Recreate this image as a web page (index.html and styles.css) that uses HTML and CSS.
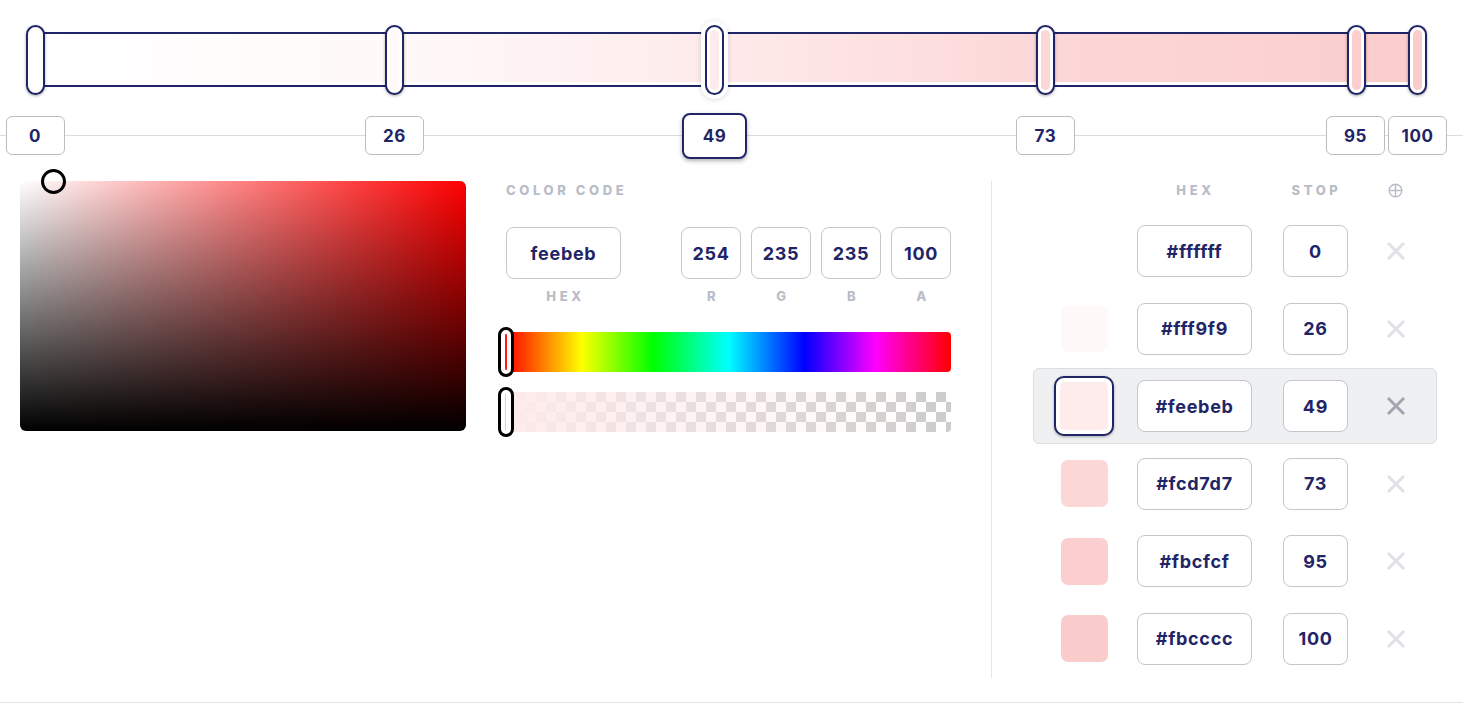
FILE: index.html
```html
<!DOCTYPE html>
<html>
<head>
<meta charset="utf-8">
<link rel="stylesheet" href="styles.css">
</head>
<body>
<div class="editor">
  <div class="gradient-area">
    <div class="bar"></div>
    <div class="handle" style="left:26px"><span style="background:#ffffff"></span></div>
    <div class="handle" style="left:385px"><span style="background:#fff9f9"></span></div>
    <div class="handle active" style="left:705px"><span style="background:#feebeb"></span></div>
    <div class="handle" style="left:1036px"><span style="background:#fcd7d7"></span></div>
    <div class="handle" style="left:1347px"><span style="background:#fbcfcf"></span></div>
    <div class="handle" style="left:1408px"><span style="background:#fbcccc"></span></div>
  </div>
  <div class="scale">
    <div class="tick" style="left:35px">0</div>
    <div class="tick" style="left:394.5px">26</div>
    <div class="tick active" style="left:714.5px">49</div>
    <div class="tick" style="left:1045.5px">73</div>
    <div class="tick" style="left:1355.5px">95</div>
    <div class="tick" style="left:1417.5px">100</div>
  </div>

  <div class="main">
    <div class="sv">
      <div class="sv-cursor"></div>
    </div>

    <div class="mid">
      <div class="caps section-label">COLOR CODE</div>
      <div class="code-row">
        <div class="field hex-field">
          <div class="input">feebeb</div>
          <div class="caps field-label">HEX</div>
        </div>
        <div class="rgba">
          <div class="field small">
            <div class="input">254</div>
            <div class="caps field-label">R</div>
          </div>
          <div class="field small">
            <div class="input">235</div>
            <div class="caps field-label">G</div>
          </div>
          <div class="field small">
            <div class="input">235</div>
            <div class="caps field-label">B</div>
          </div>
          <div class="field small">
            <div class="input">100</div>
            <div class="caps field-label">A</div>
          </div>
        </div>
      </div>
      <div class="slider hue"><div class="slider-handle"></div></div>
      <div class="slider alpha"><div class="alpha-fill"></div><div class="slider-handle faint"></div></div>
    </div>

    <div class="divider"></div>

    <div class="right">
      <div class="list-head">
        <div class="c-swatch"></div>
        <div class="c-hex caps">HEX</div>
        <div class="c-stop caps">STOP</div>
        <div class="c-del">
          <svg class="add-icon" width="15" height="15" viewBox="0 0 15 15"><circle cx="7.5" cy="7.5" r="6.3" fill="none" stroke="currentColor" stroke-width="1.4"/><path d="M7.5 1.2V13.8M1.2 7.5H13.8" stroke="currentColor" stroke-width="1.4"/></svg>
        </div>
      </div>
      <div class="rows">
        <div class="row">
          <div class="c-swatch"><div class="swatch" style="background:#ffffff"></div></div>
          <div class="c-hex"><div class="input">#ffffff</div></div>
          <div class="c-stop"><div class="input">0</div></div>
          <div class="c-del"><svg width="20" height="20" viewBox="0 0 20 20"><path d="M2 2L18 18M18 2L2 18" stroke="currentColor" stroke-width="3"/></svg></div>
        </div>
        <div class="row">
          <div class="c-swatch"><div class="swatch" style="background:#fff9f9"></div></div>
          <div class="c-hex"><div class="input">#fff9f9</div></div>
          <div class="c-stop"><div class="input">26</div></div>
          <div class="c-del"><svg width="20" height="20" viewBox="0 0 20 20"><path d="M2 2L18 18M18 2L2 18" stroke="currentColor" stroke-width="3"/></svg></div>
        </div>
        <div class="row selected">
          <div class="c-swatch"><div class="swatch-frame"><div class="swatch-inner" style="background:#feebeb"></div></div></div>
          <div class="c-hex"><div class="input">#feebeb</div></div>
          <div class="c-stop"><div class="input">49</div></div>
          <div class="c-del"><svg width="20" height="20" viewBox="0 0 20 20"><path d="M2 2L18 18M18 2L2 18" stroke="currentColor" stroke-width="3"/></svg></div>
        </div>
        <div class="row">
          <div class="c-swatch"><div class="swatch" style="background:#fcd7d7"></div></div>
          <div class="c-hex"><div class="input">#fcd7d7</div></div>
          <div class="c-stop"><div class="input">73</div></div>
          <div class="c-del"><svg width="20" height="20" viewBox="0 0 20 20"><path d="M2 2L18 18M18 2L2 18" stroke="currentColor" stroke-width="3"/></svg></div>
        </div>
        <div class="row">
          <div class="c-swatch"><div class="swatch" style="background:#fbcfcf"></div></div>
          <div class="c-hex"><div class="input">#fbcfcf</div></div>
          <div class="c-stop"><div class="input">95</div></div>
          <div class="c-del"><svg width="20" height="20" viewBox="0 0 20 20"><path d="M2 2L18 18M18 2L2 18" stroke="currentColor" stroke-width="3"/></svg></div>
        </div>
        <div class="row">
          <div class="c-swatch"><div class="swatch" style="background:#fbcccc"></div></div>
          <div class="c-hex"><div class="input">#fbcccc</div></div>
          <div class="c-stop"><div class="input">100</div></div>
          <div class="c-del"><svg width="20" height="20" viewBox="0 0 20 20"><path d="M2 2L18 18M18 2L2 18" stroke="currentColor" stroke-width="3"/></svg></div>
        </div>
      </div>
    </div>
  </div>
</div>
</body>
</html>
```

FILE: styles.css
```css
* { box-sizing: border-box; }

html, body {
  margin: 0;
  padding: 0;
  background: #ffffff;
  font-family: Inter, "Open Sans", "Liberation Sans", sans-serif;
  color: #1f2566;
}

.editor {
  width: 1463px;
  height: 706px;
  overflow: hidden;
}

/* ---------- gradient bar ---------- */
.gradient-area {
  position: relative;
  height: 87px;
  padding-top: 32px;
}

.bar {
  margin: 0 41px 0 27px;
  height: 55px;
  border: 2px solid #1f2566;
  padding-bottom: 3px;
  background-color: #ffffff;
  background-image: linear-gradient(to right, #ffffff 0%, #fff9f9 26%, #feebeb 49%, #fcd7d7 73%, #fbcfcf 95%, #fbcccc 100%);
  background-clip: content-box;
}

.handle {
  position: absolute;
  top: 25px;
  width: 19px;
  height: 70px;
  border: 2px solid #1f2566;
  border-radius: 10px;
  background: #ffffff;
  padding: 3px;
  box-shadow: 0 1px 3px rgba(0, 0, 0, 0.35);
}

.handle span {
  display: block;
  width: 100%;
  height: 100%;
  border-radius: 5px;
}

.handle.active {
  box-shadow: 0 0 0 4px #ffffff, 0 1px 6px 3px rgba(0, 0, 0, 0.2);
}

/* ---------- scale ---------- */
.scale {
  position: relative;
  height: 40px;
  margin-top: 29px;
}

.scale::before {
  content: "";
  position: absolute;
  left: 0;
  right: 0;
  top: 19px;
  height: 1px;
  background: #dcdcdc;
}

.tick {
  position: absolute;
  top: 0;
  width: 59px;
  height: 39px;
  margin-left: -29.5px;
  border: 1px solid #bdbdbd;
  border-radius: 6px;
  background: #ffffff;
  display: flex;
  align-items: center;
  justify-content: center;
  font-size: 17px;
  font-weight: 700;
  letter-spacing: 0.6px;
}

.tick.active {
  top: -3px;
  width: 65px;
  height: 46px;
  margin-left: -32.5px;
  border: 2px solid #1f2566;
  border-radius: 8px;
  box-shadow: 0 2px 4px rgba(0, 0, 0, 0.3);
}

/* ---------- main ---------- */
.main {
  display: flex;
  margin-top: 25px;
  height: 522px;
  border-bottom: 1px solid #e3e3e3;
}

.sv {
  position: relative;
  margin-left: 20px;
  width: 446px;
  height: 250px;
  border-radius: 6px;
  background-image: linear-gradient(to top, #000000, rgba(0, 0, 0, 0)), linear-gradient(to right, #ffffff, #ff0000);
}

.sv-cursor {
  position: absolute;
  left: 21px;
  top: -12px;
  width: 25px;
  height: 25px;
  border: 3px solid #000000;
  border-radius: 50%;
}

.caps {
  font-size: 13px;
  font-weight: 800;
  letter-spacing: 3.6px;
  color: #b9bdc7;
  line-height: 18px;
}

.mid {
  width: 453px;
  margin-left: 32px;
}

.section-label {
  padding-left: 8px;
}

.code-row {
  display: flex;
  margin-top: 28px;
  padding-left: 8px;
}

.field {
  display: flex;
  flex-direction: column;
  align-items: center;
}

.input {
  height: 52px;
  border: 1px solid #c5c6ce;
  border-radius: 8px;
  background: #ffffff;
  display: flex;
  align-items: center;
  justify-content: center;
  font-size: 18px;
  font-weight: 700;
  letter-spacing: 0.7px;
  color: #1f2566;
}

.hex-field .input { width: 115px; }
.field.small .input { width: 60px; }

.field-label {
  margin-top: 8px;
  padding-left: 4px;
}

.rgba {
  display: flex;
  gap: 10px;
  margin-left: 60px;
}

.slider {
  position: relative;
  height: 40px;
  margin-left: 8px;
  border-radius: 4px;
}

.hue {
  margin-top: 27px;
  background: linear-gradient(to right, #ff0000 0%, #ffff00 17%, #00ff00 33%, #00ffff 50%, #0000ff 67%, #ff00ff 83%, #ff0000 100%);
}

.alpha {
  margin-top: 20px;
  background-color: #ffffff;
  background-image:
    linear-gradient(45deg, #cccccc 25%, transparent 25%, transparent 75%, #cccccc 75%),
    linear-gradient(45deg, #cccccc 25%, transparent 25%, transparent 75%, #cccccc 75%);
  background-size: 20px 20px;
  background-position: 0 0, 10px 10px;
}

.alpha-fill {
  position: absolute;
  inset: 0;
  border-radius: 4px;
  background: linear-gradient(to right, rgba(254, 235, 235, 1), rgba(254, 235, 235, 0));
}

.slider-handle {
  position: absolute;
  left: -8px;
  top: -5px;
  width: 16px;
  height: 50px;
  border: 3px solid #000000;
  border-radius: 8px;
  background: #ffffff;
}

.slider-handle::after {
  content: "";
  position: absolute;
  left: 4px;
  top: 4px;
  bottom: 4px;
  width: 2px;
  border-radius: 1px;
  background: #ff1a1a;
}

.slider-handle.faint::after {
  background: #f6c9c9;
  width: 1px;
}

.divider {
  width: 1px;
  height: 497px;
  margin-left: 40px;
  background: #e6e6e6;
}

/* ---------- right list ---------- */
.right {
  width: 404px;
  margin-left: 41px;
}

.list-head,
.row {
  display: flex;
  align-items: center;
  padding-left: 20px;
}

.list-head {
  height: 18px;
}

.c-swatch {
  width: 60px;
  display: flex;
  justify-content: center;
}

.c-hex {
  width: 115px;
  margin-left: 23px;
  text-align: center;
}

.c-hex.caps,
.c-stop.caps { padding-left: 4px; }

.c-stop {
  width: 65px;
  margin-left: 31px;
  text-align: center;
}

.c-del {
  width: 20px;
  margin-left: 38px;
  display: flex;
  justify-content: center;
  color: #dfe1e6;
}

.add-icon { color: #b8bcc8; }

.rows {
  display: flex;
  flex-direction: column;
  gap: 1.5px;
  margin-top: 14px;
}

.row {
  height: 76px;
  border: 1px solid transparent;
  border-radius: 6px;
}

.row.selected {
  background: #eff0f2;
  border-color: #dcdde1;
}

.row.selected .c-del { color: #a1a6b1; }

.swatch {
  width: 47px;
  height: 47px;
  border-radius: 7px;
}

.swatch-frame {
  width: 60px;
  height: 60px;
  border: 2px solid #1f2566;
  border-radius: 10px;
  background: #ffffff;
  padding: 4px;
  box-shadow: 0 1px 3px rgba(0, 0, 0, 0.3);
}

.swatch-inner {
  width: 100%;
  height: 100%;
  border-radius: 5px;
}
```
